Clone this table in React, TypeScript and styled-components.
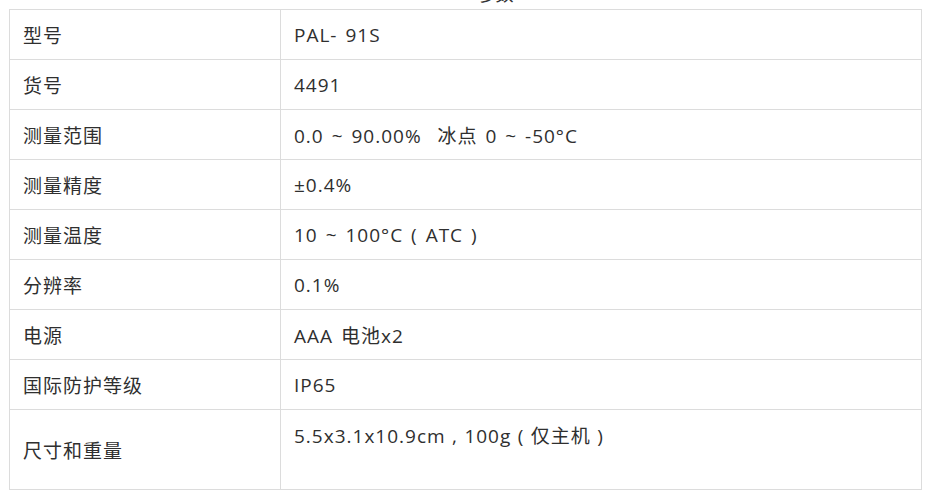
import React from "react";
import styled, { createGlobalStyle } from "styled-components";

const Global = createGlobalStyle`
  html, body { margin: 0; padding: 0; background: #fff; }
  body {
    font-family: "Open Sans", "Noto Sans CJK SC", sans-serif;
    color: #333;
  }
`;

const Page = styled.div`
  padding: 0 16px 0 9px;
`;

const Title = styled.div`
  height: 9px;
  overflow: hidden;
  display: flex;
  justify-content: center;
  align-items: flex-end;
  padding-left: 60px;
  font-size: 18px;
  line-height: 9px;
  color: #333;
`;

const TitleText = styled.span`
  margin-bottom: 10px;
`;

const Table = styled.table`
  width: 913px;
  border-collapse: collapse;
  table-layout: fixed;
  font-size: 19px;
  letter-spacing: 1px;
`;

const Row = styled.tr<{ $tall?: boolean }>`
  height: ${(p) => (p.$tall ? 80 : 50)}px;
`;

const Cell = styled.td<{ $top?: boolean; $spaced?: boolean }>`
  border: 1px solid #dcdcdc;
  padding: ${(p) => (p.$top ? "11px 13px 0" : "0 13px")};
  vertical-align: ${(p) => (p.$top ? "top" : "middle")};
  white-space: pre;
  word-spacing: ${(p) => (p.$spaced ? 2 : 0.5)}px;
  color: #2f2f2f;
`;

const rows: [string, string][] = [
  ["型号", "PAL- 91S"],
  ["货号", "4491"],
  ["测量范围", "0.0 ~ 90.00%  冰点 0 ~ -50°C"],
  ["测量精度", "±0.4%"],
  ["测量温度", "10 ~ 100°C ( ATC )"],
  ["分辨率", "0.1%"],
  ["电源", "AAA 电池x2"],
  ["国际防护等级", "IP65"],
];

export default function App() {
  return (
    <>
      <Global />
      <Page>
        <Title>
          <TitleText>参数</TitleText>
        </Title>
        <Table>
          <colgroup>
            <col style={{ width: 271 }} />
            <col />
          </colgroup>
          <tbody>
            {rows.map(([k, v]) => (
              <Row key={k}>
                <Cell>{k}</Cell>
                <Cell $spaced>{v}</Cell>
              </Row>
            ))}
            <Row $tall>
              <Cell>尺寸和重量</Cell>
              <Cell $top>5.5x3.1x10.9cm , 100g ( 仅主机 )</Cell>
            </Row>
          </tbody>
        </Table>
      </Page>
    </>
  );
}
